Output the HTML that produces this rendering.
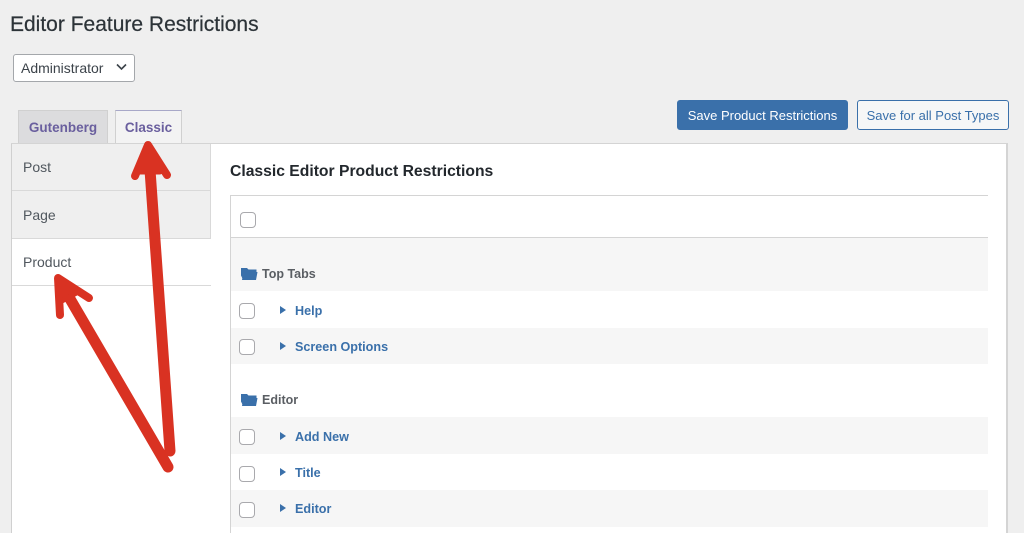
<!DOCTYPE html>
<html><head><meta charset="utf-8"><style>
*{box-sizing:border-box}
html,body{margin:0;padding:0}
html{background:#efefef}
body{width:1024px;height:533px;overflow:hidden;background:#efefef;position:relative;font-family:"Liberation Sans",sans-serif;color:#3c434a;filter:blur(.35px)}
.a{position:absolute;white-space:nowrap}
h1{position:absolute;left:10px;top:11px;margin:0;font-size:21px;font-weight:400;line-height:27px;color:#2c3338;white-space:nowrap;-webkit-text-stroke:.2px #2c3338}
.sel{left:13px;top:54px;width:122px;height:28px;background:#fff;border:1px solid #a4a7ab;border-radius:3px;font-size:14px;line-height:26px;padding-left:7px;color:#3c434a}
.tab{top:110px;height:34px;border:1px solid #d0d0d0;font-size:13.5px;font-weight:700;color:#6a5f9e;text-align:center;line-height:34px}
.btn{top:100px;height:30px;border-radius:3px;font-size:13px;line-height:30px;text-align:center;border:1px solid #3a70aa}
.side{left:11px;top:143px;width:200px;height:390px;background:#fff;border-left:1px solid #d0d0d0}
.si{position:absolute;left:0;width:199px;font-size:14px;padding-left:11px;color:#50575e;border-bottom:1px solid #d9d9d9}
.panel{left:210px;top:143px;width:798px;height:390px;background:#fff;border:1px solid #d4d4d4;border-right-width:2px;border-bottom:0;border-left:0}
.r{position:absolute;left:230px;width:758px}
.g{background:#f6f6f6}
.cb{position:absolute;width:16px;height:16px;background:#fff;border:1px solid #a9a9ad;border-radius:4px}
.l{position:absolute;left:295px;font-size:12.6px;font-weight:700;color:#3a70aa;line-height:16px;white-space:nowrap}
.h{position:absolute;left:262px;font-size:12.5px;font-weight:700;color:#5a5e63;line-height:16px;white-space:nowrap}
.t{position:absolute;left:280px;width:0;height:0;border-left:6px solid #3a70aa;border-top:4px solid transparent;border-bottom:4px solid transparent}
svg{position:absolute;left:0;top:0}
</style></head><body>
<h1>Editor Feature Restrictions</h1>
<div class="a sel">Administrator</div>
<svg width="1024" height="533" style="z-index:1"><path d="M117 64.500l4.500 4.500L126 64.500" fill="none" stroke="#3c434a" stroke-width="1.600"/></svg>

<div class="a btn" style="left:677px;width:171px;background:#3a70aa;color:#fff">Save Product Restrictions</div>
<div class="a btn" style="left:857px;width:152px;background:#f6f7f7;color:#3a70aa">Save for all Post Types</div>

<div class="a panel"></div>
<div class="a side">
<div class="si" style="top:0;height:48px;line-height:48px;background:#efefef;border-right:1px solid #d9d9d9">Post</div>
<div class="si" style="top:48px;height:48px;line-height:48px;background:#efefef;border-right:1px solid #d9d9d9">Page</div>
<div class="si" style="top:96px;height:47px;line-height:46px;background:#fff">Product</div>
</div>
<div class="a tab" style="left:18px;width:90px;background:#dcdcde;border-bottom:0">Gutenberg</div>
<div class="a tab" style="left:115px;width:67px;background:#f3f3f3;border-top-color:#a8a8c8;border-bottom:0">Classic</div>
<div class="a" style="left:11px;top:143px;width:200px;height:1px;background:#d4d4d4"></div>

<div class="a" style="left:230px;top:162px;font-size:15.7px;font-weight:700;color:#23282d;line-height:19px">Classic Editor Product Restrictions</div>

<div class="r" style="top:195px;height:43px;border-top:1px solid #d4d4d4;border-bottom:1px solid #d4d4d4;border-left:1px solid #d4d4d4"></div>
<div class="r g" style="top:238px;height:53px"></div>
<div class="r g" style="top:328px;height:36px"></div>
<div class="r g" style="top:417px;height:37px"></div>
<div class="r g" style="top:490px;height:37px"></div>
<div class="a" style="left:230px;top:238px;width:1px;height:295px;background:#d4d4d4"></div>

<div class="cb" style="left:240px;top:212px"></div>
<div class="cb" style="left:239px;top:303px"></div>
<div class="cb" style="left:239px;top:339px"></div>
<div class="cb" style="left:239px;top:429px"></div>
<div class="cb" style="left:239px;top:466px"></div>
<div class="cb" style="left:239px;top:502px"></div>

<svg width="1024" height="533"><g fill="#3a70aa">
<path d="M241 268h6l1.500 1.500h8v3l-13 1-1 5-1.500-3z"/><path d="M243.500 272h14l-1.500 8h-14z"/>
<path d="M241 394h6l1.500 1.500h8v3l-13 1-1 5-1.500-3z"/><path d="M243.500 398h14l-1.500 8h-14z"/>
</g></svg>

<div class="h" style="top:266px">Top Tabs</div>
<div class="h" style="top:392px">Editor</div>
<div class="t" style="top:306px"></div><div class="l" style="top:303px">Help</div>
<div class="t" style="top:342px"></div><div class="l" style="top:339px">Screen Options</div>
<div class="t" style="top:432px"></div><div class="l" style="top:429px">Add New</div>
<div class="t" style="top:468px"></div><div class="l" style="top:465px">Title</div>
<div class="t" style="top:504px"></div><div class="l" style="top:501px">Editor</div>

<svg width="1024" height="533" style="z-index:2">
<g fill="none" stroke="#d93222" stroke-linecap="round" stroke-linejoin="round">
<path d="M170 451L150 170" stroke-width="11"/>
<path d="M135 176L148 145L167 175" stroke-width="8"/>
<path d="M148 146L139 172L160 172Z" fill="#d93222" stroke-width="5"/>
<path d="M168 467L66 292" stroke-width="11"/>
<path d="M60 315L58 278L89 298" stroke-width="8"/>
<path d="M58 278L60 302L80 291Z" fill="#d93222" stroke-width="5"/>
</g></svg>
</body></html>
